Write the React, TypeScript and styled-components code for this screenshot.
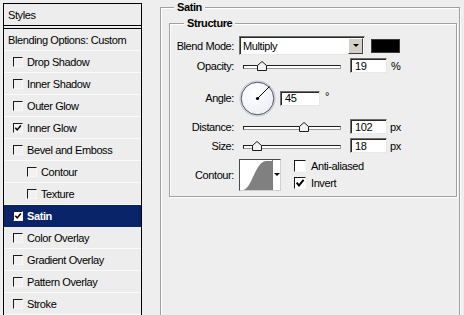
import React from 'react';
import styled, { createGlobalStyle, css } from 'styled-components';

const GlobalStyle = createGlobalStyle`
  html, body {
    margin: 0;
    padding: 0;
    background: #eeeeee;
  }

  body {
    font-family: "Liberation Sans", Arial, sans-serif;
    font-size: 11px;
    letter-spacing: -0.4px;
    color: #000;
  }
`;

interface StyleItem {
  label: string;
  checked?: boolean;
  indent?: boolean;
  selected?: boolean;
}

const styleItems: StyleItem[] = [
  { label: 'Drop Shadow' },
  { label: 'Inner Shadow' },
  { label: 'Outer Glow' },
  { label: 'Inner Glow', checked: true },
  { label: 'Bevel and Emboss' },
  { label: 'Contour', indent: true },
  { label: 'Texture', indent: true },
  { label: 'Satin', checked: true, selected: true },
  { label: 'Color Overlay' },
  { label: 'Gradient Overlay' },
  { label: 'Pattern Overlay' },
  { label: 'Stroke' },
];

const Dialog = styled.div`
  display: flex;
  align-items: flex-start;
  width: 464px;
  height: 315px;
  overflow: hidden;
  background: #eeeeee;
`;

/* left: list of layer styles */

const StylesList = styled.div`
  flex-shrink: 0;
  box-sizing: border-box;
  width: 139px;
  margin: 3px 0 0 3px;
  border: 1px solid #000;
  border-bottom: none;
  background: #ededed;
`;

const ListHeader = styled.div`
  display: flex;
  align-items: center;
  height: 21px;
  padding-left: 4px;
  border-bottom: 4px double #000;
`;

const ListItem = styled.div<{ $selected?: boolean; $indent?: boolean }>`
  display: flex;
  align-items: center;
  gap: 4px;
  box-sizing: border-box;
  height: 22px;
  padding-left: ${(props): string => (props.$indent ? '23px' : '9px')};
  border-bottom: 1px solid #fafafa;

  ${(props) => props.$selected && css`
    background: #0a246a;
    color: #fff;
    font-weight: bold;
    border-bottom-color: #0a246a;
  `}
`;

const PlainItem = styled(ListItem)`
  padding-left: 4px;
`;

const Box = styled.span<{ $size: number; $light?: boolean }>`
  position: relative;
  flex-shrink: 0;
  box-sizing: border-box;
  width: ${(props): string => `${props.$size}px`};
  height: ${(props): string => `${props.$size}px`};
  border: 1px solid;
  border-color: #1a1a1a #f8f8f8 #f8f8f8 #1a1a1a;
  background: ${(props): string => (props.$light ? '#ffffff' : '#f1f1f1')};

  svg {
    position: absolute;
    left: 0;
    top: 0;
  }
`;

const CheckBox = ({ size, checked, light }: { size: number; checked?: boolean; light?: boolean }) => {
  const s = size - 2;
  return (
    <Box $size={size} $light={light}>
      {checked && (
        <svg width={s} height={s} viewBox="0 0 10 10">
          <path d="M1.6 4.6 L4 7.4 L8.6 1.8" fill="none" stroke="#000" strokeWidth="1.9" />
        </svg>
      )}
    </Box>
  );
};

/* right: settings panel */

const Content = styled.div`
  flex-shrink: 0;
  margin: 7px 0 0 18px;
`;

const GroupBox = styled.div<{ $width: number; $height: number }>`
  position: relative;
  box-sizing: border-box;
  width: ${(props): string => `${props.$width}px`};
  height: ${(props): string => `${props.$height}px`};
  border: 1px solid #a0a0a0;
  box-shadow: inset 1px 1px 0 #fff, 1px 1px 0 #fff;
`;

const OuterGroup = styled(GroupBox)`
  padding: 15px 0 0 8px;
`;

const InnerGroup = styled(GroupBox)`
  padding-top: 12px;
`;

const Legend = styled.span<{ $left: number }>`
  position: absolute;
  top: -7px;
  left: ${(props): string => `${props.$left}px`};
  padding: 0 3px;
  line-height: 13px;
  font-weight: bold;
  background: #eeeeee;
`;

const FieldRow = styled.div<{ $height: number; $top?: number }>`
  display: flex;
  align-items: center;
  height: ${(props): string => `${props.$height}px`};
  margin-top: ${(props): string => `${props.$top ?? 0}px`};
`;

const FieldLabel = styled.span`
  flex-shrink: 0;
  width: 64px;
  margin-right: 5px;
  text-align: right;
  white-space: nowrap;
`;

const Sunken = css`
  box-sizing: border-box;
  border: 1px solid;
  border-color: #6e6e6e #e8e8e8 #e8e8e8 #6e6e6e;
  box-shadow: inset 1px 1px 0 #2a2a2a;
  background: #fff;
`;

const SelectBox = styled.div`
  ${Sunken}
  display: flex;
  align-items: center;
  width: 126px;
  height: 19px;
  padding: 0 1px 0 3px;
`;

const SelectValue = styled.span`
  flex: 1;
`;

const SelectButton = styled.span`
  display: flex;
  align-items: center;
  justify-content: center;
  box-sizing: border-box;
  width: 15px;
  height: 16px;
  border: 1px solid;
  border-color: #ffffff #404040 #404040 #ffffff;
  background: #d4d0c8;
`;

const DownArrow = styled.span`
  width: 0;
  height: 0;
  border-left: 3px solid transparent;
  border-right: 3px solid transparent;
  border-top: 3px solid #000;
`;

const ColorSwatch = styled.span`
  width: 29px;
  height: 14px;
  margin-left: 6px;
  box-sizing: border-box;
  border: 1px solid #3a3a3a;
  background: #000;
`;

const SliderWrap = styled.div`
  display: flex;
  align-items: center;
  width: 107px;
  height: 15px;
  padding: 0 5px 0 4px;
  box-sizing: border-box;
  margin-right: 4px;
`;

const SliderTrack = styled.div`
  position: relative;
  flex: 1;
  box-sizing: border-box;
  height: 4px;
  margin-top: 2px;
  border: 1px solid;
  border-color: #1e1e1e #9a9a9a #9a9a9a #1e1e1e;
  background: #fff;
`;

const SliderThumb = styled.svg`
  position: absolute;
  top: -5px;
  transform: translateX(-50%);
`;

const NumberInput = styled.input`
  ${Sunken}
  width: 37px;
  height: 15px;
  margin: 0;
  padding: 0 0 0 4px;
  font: inherit;
  letter-spacing: inherit;
  color: #000;
  outline: none;
`;

const AngleInput = styled(NumberInput)`
  width: 40px;
`;

const Unit = styled.span<{ $gap: number; $raise?: number }>`
  margin-left: ${(props): string => `${props.$gap}px`};
  position: relative;
  top: ${(props): string => `${-(props.$raise ?? 0)}px`};
`;

const Dial = styled.svg`
  flex-shrink: 0;
  margin-right: 4px;
`;

const ContourPicker = styled.div`
  display: flex;
  box-sizing: border-box;
  width: 42px;
  height: 32px;
  border: 1px solid;
  border-color: #4a4a4a #d0d0d0 #d0d0d0 #4a4a4a;
  background: #fff;
`;

const ContourCurve = styled.svg`
  border-right: 1px solid #7c7c7c;
`;

const ContourArrow = styled.span`
  flex: 1;
  display: flex;
  align-items: center;
  justify-content: center;
`;

const OptionList = styled.div`
  display: flex;
  flex-direction: column;
  gap: 4px;
  align-self: flex-start;
  margin: 1px 0 0 13px;
`;

const OptionItem = styled.label`
  display: flex;
  align-items: center;
  gap: 5px;
  height: 13px;
`;

const Slider = ({ value, position, unit }: { value: string; position: number; unit: string }) => (
  <>
    <SliderWrap>
      <SliderTrack>
        <SliderThumb width="10" height="10" viewBox="0 0 10 10" style={{ left: `${position}%` }}>
          <path d="M5 0.5 L9.5 4.5 L9.5 9.5 L0.5 9.5 L0.5 4.5 Z" fill="#f2f2f2" stroke="#1a1a1a" strokeWidth="1" />
        </SliderThumb>
      </SliderTrack>
    </SliderWrap>
    <NumberInput readOnly defaultValue={value} />
    <Unit $gap={unit === '%' ? 4 : 3}>{unit}</Unit>
  </>
);

export default function App() {
  return (
    <Dialog>
      <GlobalStyle />
      <StylesList>
        <ListHeader>Styles</ListHeader>
        <PlainItem>Blending Options: Custom</PlainItem>
        {styleItems.map((item) => (
          <ListItem key={item.label} $selected={item.selected} $indent={item.indent}>
            <CheckBox size={10} checked={item.checked} light={item.selected} />
            <span>{item.label}</span>
          </ListItem>
        ))}
      </StylesList>

      <Content>
        <OuterGroup $width={300} $height={330}>
          <Legend $left={13}>Satin</Legend>
          <InnerGroup $width={288} $height={174}>
            <Legend $left={14}>Structure</Legend>

            <FieldRow $height={19}>
              <FieldLabel>Blend Mode:</FieldLabel>
              <SelectBox>
                <SelectValue>Multiply</SelectValue>
                <SelectButton><DownArrow /></SelectButton>
              </SelectBox>
              <ColorSwatch />
            </FieldRow>

            <FieldRow $height={15} $top={3}>
              <FieldLabel>Opacity:</FieldLabel>
              <Slider value="19" position={19} unit="%" />
            </FieldRow>

            <FieldRow $height={36} $top={7}>
              <FieldLabel>Angle:</FieldLabel>
              <Dial width="37" height="37" viewBox="0 0 37 37">
                <defs>
                  <radialGradient id="dialFill" cx="0.4" cy="0.35" r="0.7">
                    <stop offset="0" stopColor="#ffffff" />
                    <stop offset="1" stopColor="#eceef4" />
                  </radialGradient>
                </defs>
                <circle cx="18.5" cy="18.5" r="17.5" fill="none" stroke="#c4cde4" strokeWidth="1.2" />
                <circle cx="18.5" cy="18.5" r="16.3" fill="url(#dialFill)" stroke="#505050" strokeWidth="1" />
                <line x1="18.5" y1="18.5" x2="30.5" y2="6.5" stroke="#000" strokeWidth="1" />
                <circle cx="18.5" cy="18.5" r="1.6" fill="#000" />
              </Dial>
              <AngleInput readOnly defaultValue="45" />
              <Unit $gap={5} $raise={2}>°</Unit>
            </FieldRow>

            <FieldRow $height={15} $top={3}>
              <FieldLabel>Distance:</FieldLabel>
              <Slider value="102" position={63} unit="px" />
            </FieldRow>

            <FieldRow $height={15} $top={4}>
              <FieldLabel>Size:</FieldLabel>
              <Slider value="18" position={14} unit="px" />
            </FieldRow>

            <FieldRow $height={33} $top={5}>
              <FieldLabel>Contour:</FieldLabel>
              <ContourPicker>
                <ContourCurve width="32" height="30" viewBox="0 0 32 30">
                  <path d="M3 30 C 12 29, 15 2, 26 1 L 32 1 L 32 30 Z" fill="#808080" />
                </ContourCurve>
                <ContourArrow><DownArrow /></ContourArrow>
              </ContourPicker>
              <OptionList>
                <OptionItem>
                  <CheckBox size={12} light />
                  <span>Anti-aliased</span>
                </OptionItem>
                <OptionItem>
                  <CheckBox size={12} checked light />
                  <span>Invert</span>
                </OptionItem>
              </OptionList>
            </FieldRow>
          </InnerGroup>
        </OuterGroup>
      </Content>
    </Dialog>
  );
}
